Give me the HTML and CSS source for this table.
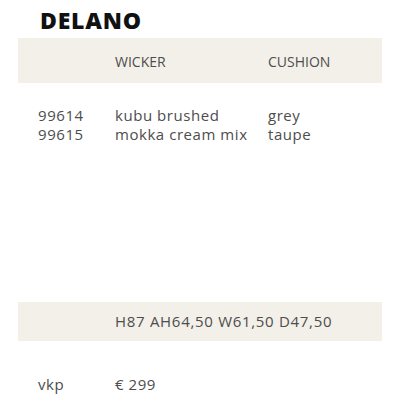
FILE: index.html
```html
<!DOCTYPE html>
<html>
<head>
<meta charset="utf-8">
<link rel="stylesheet" href="styles.css">
</head>
<body>
<div class="sheet">
  <h1 class="title">DELANO</h1>
  <div class="band head">
    <span></span><span>WICKER</span><span>CUSHION</span>
  </div>
  <div class="rows">
    <span>99614</span><span>kubu brushed</span><span>grey</span>
    <span>99615</span><span>mokka cream mix</span><span>taupe</span>
  </div>
  <div class="band dims">
    <span></span><span>H87 AH64,50 W61,50 D47,50</span>
  </div>
  <div class="rows price">
    <span>vkp</span><span>€ 299</span>
  </div>
</div>
</body>
</html>
```
FILE: styles.css
```css
html, body {
  margin: 0;
  padding: 0;
  background: #ffffff;
}
.sheet {
  width: 364px;
  margin-left: 18px;
  font-family: "Open Sans", sans-serif;
  font-size: 15px;
  color: #4d4d4d;
}
.title {
  margin: 0 0 5px 22px;
  padding-top: 7px;
  font-family: "Open Sans", sans-serif;
  font-weight: 800;
  font-size: 23px;
  line-height: 26px;
  color: #111111;
  letter-spacing: 0.8px;
}
.band {
  background: #f3f0ea;
}
.head, .rows, .dims {
  display: grid;
  grid-template-columns: 77px 153px 1fr;
  padding-left: 20px;
  line-height: 19px;
}
.head {
  padding-top: 14px;
  height: 31px;
  font-size: 14px;
}
.rows {
  margin-top: 23px;
  line-height: 18.5px;
  height: 196px;
  align-content: start;
  letter-spacing: 0.55px;
}
.dims {
  padding-top: 9.5px;
  height: 29.5px;
  grid-template-columns: 77px 1fr;
  letter-spacing: 0.7px;
}
.price {
  margin-top: 34px;
  height: auto;
  grid-template-columns: 77px 1fr;
}
```
